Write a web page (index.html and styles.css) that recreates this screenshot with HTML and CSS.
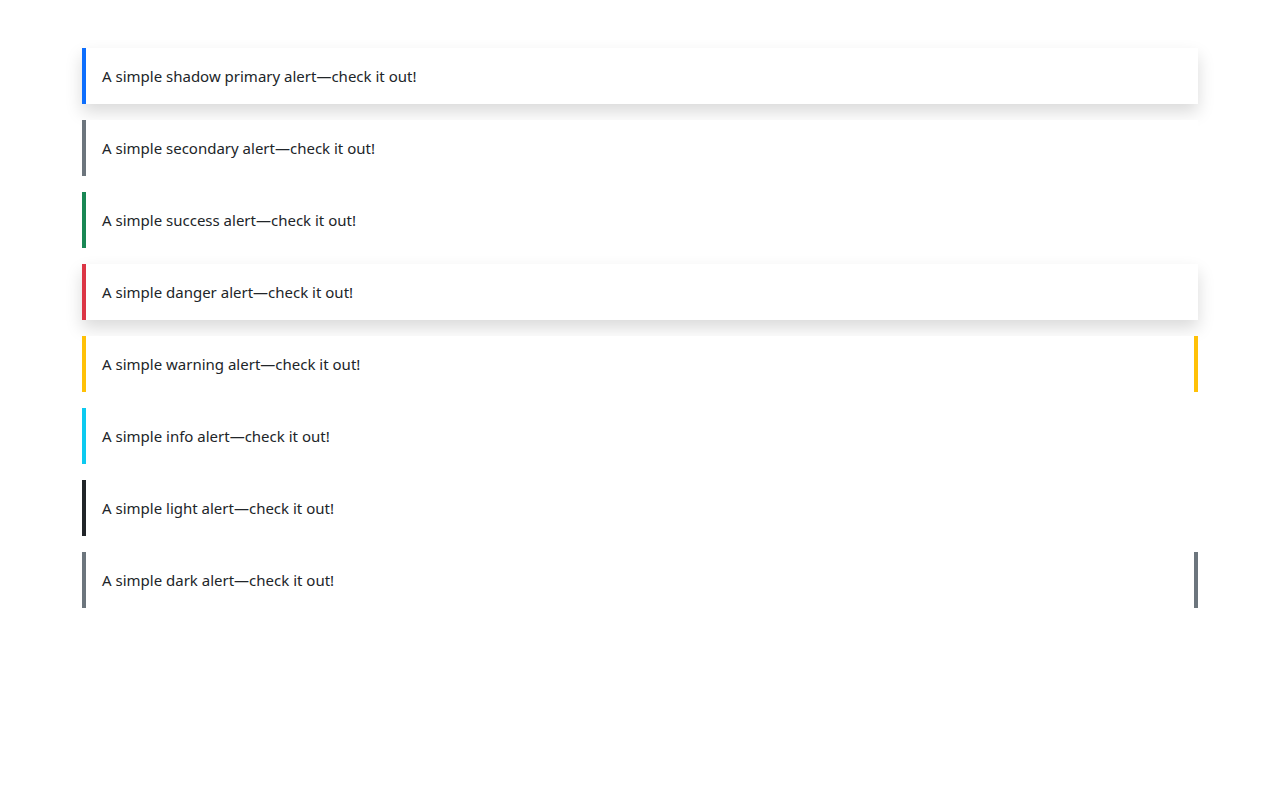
FILE: index.html
```
<!DOCTYPE html>
<html lang="en">
<head>
<meta charset="utf-8">
<title>Alerts</title>
<link rel="stylesheet" href="styles.css">
</head>
<body>
<div class="stack">
  <div class="alert shadow b-primary">A simple shadow primary alert—check it out!</div>
  <div class="alert b-secondary">A simple secondary alert—check it out!</div>
  <div class="alert b-success">A simple success alert—check it out!</div>
  <div class="alert shadow b-danger">A simple danger alert—check it out!</div>
  <div class="alert b-warning right">A simple warning alert—check it out!</div>
  <div class="alert b-info">A simple info alert—check it out!</div>
  <div class="alert b-light">A simple light alert—check it out!</div>
  <div class="alert b-dark right">A simple dark alert—check it out!</div>
</div>
</body>
</html>
```
FILE: styles.css
```
html, body {
  margin: 0;
  background: #fff;
}
body {
  font-family: "Noto Sans", "Open Sans", sans-serif;
  font-size: 15px;
  color: #212529;
  padding: 48px 82px;
}
.stack {
  display: flex;
  flex-direction: column;
  gap: 16px;
}
.alert {
  box-sizing: border-box;
  height: 56px;
  padding: 16px 16px;
  line-height: 24px;
  border-left: 4px solid #ccc;
  background: #fff;
}
.shadow {
  box-shadow: 0 8px 16px rgba(0, 0, 0, 0.15);
}
.b-primary { border-left-color: #0d6efd; }
.b-secondary { border-left-color: #6c757d; }
.b-success { border-left-color: #198754; }
.b-danger { border-left-color: #dc3545; }
.b-warning { border-left-color: #ffc107; }
.b-warning.right { border-right: 4px solid #ffc107; }
.b-info { border-left-color: #0dcaf0; }
.b-light { border-left-color: #212529; }
.b-dark { border-left-color: #6c757d; }
.b-dark.right { border-right: 4px solid #6c757d; }
```
